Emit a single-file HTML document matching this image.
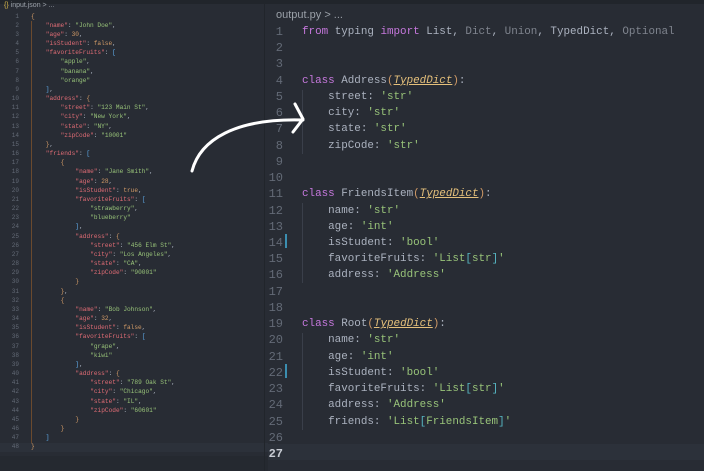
<!DOCTYPE html>
<html><head><style>
html,body{margin:0;padding:0;width:704px;height:471px;overflow:hidden;background:#282c34;}
.l{position:absolute;white-space:pre;font-family:"Liberation Mono",monospace;}
.L{font-size:6.15px;line-height:9.17px;color:#abb2bf;}
.R{font-size:10.9px;line-height:16.23px;color:#abb2bf;}
.n{position:absolute;font-family:"Liberation Mono",monospace;color:#636a76;text-align:right;white-space:nowrap;}
.k{color:#e06c75}.s{color:#98c379}.o{color:#d19a66}.b{color:#61afef}.y{color:#d19a66}
.p{color:#c678dd}.g{color:#7f848e}.t{color:#e5c07b;font-style:italic;text-decoration:underline;text-decoration-color:#e5c07b}.c{color:#56b6c2}
</style></head><body>
<div style="position:absolute;left:0;top:0;width:704px;height:4px;background:#21252b"></div>
<div style="position:absolute;left:0;top:443px;width:268px;height:9px;background:#2c313a"></div>
<div style="position:absolute;left:268px;top:444px;width:436px;height:16px;background:#2c313a"></div>
<div style="position:absolute;left:0;top:456px;width:268px;height:15px;background:#252930"></div>
<div style="position:absolute;left:264px;top:4px;width:1px;height:467px;background:#21252b"></div>
<div style="position:absolute;left:31px;top:21px;width:1px;height:422px;background:#6b4a2e"></div>
<div style="position:absolute;left:4px;top:2px;font:7px 'Liberation Sans',sans-serif;color:#9aa0a8"><span style="color:#d7b64a">{}</span> input.json &gt; ...</div>
<div style="position:absolute;left:276px;top:9px;font:11px 'Liberation Sans',sans-serif;color:#9aa0a8">output.py &gt; ...</div>
<div id="left"></div>
<div id="right"></div>
<div style="position:absolute;left:285px;top:234px;width:2px;height:14px;background:#3b8eb0"></div>
<div style="position:absolute;left:285px;top:364px;width:2px;height:14px;background:#3b8eb0"></div>
<div style="position:absolute;left:302px;top:90px;width:1px;height:64px;background:#3a3f4a"></div>
<div style="position:absolute;left:302px;top:203px;width:1px;height:80px;background:#3a3f4a"></div>
<div style="position:absolute;left:302px;top:333px;width:1px;height:97px;background:#3a3f4a"></div>
<svg style="position:absolute;left:0;top:0" width="704" height="471"><path d="M192,171 C200,140 235,118 303,120" fill="none" stroke="#fff" stroke-width="3" stroke-linecap="round"/><path d="M295,104 L303,119 L293,132" fill="none" stroke="#fff" stroke-width="3" stroke-linecap="round" stroke-linejoin="round"/></svg>
<script>
var L=[
[0,'<span class="o">{</span>'],
[1,'<span class="k">"name"</span>: <span class="s">"John Doe"</span>,'],
[1,'<span class="k">"age"</span>: <span class="o">30</span>,'],
[1,'<span class="k">"isStudent"</span>: <span class="o">false</span>,'],
[1,'<span class="k">"favoriteFruits"</span>: <span class="b">[</span>'],
[2,'<span class="s">"apple"</span>,'],
[2,'<span class="s">"banana"</span>,'],
[2,'<span class="s">"orange"</span>'],
[1,'<span class="b">]</span>,'],
[1,'<span class="k">"address"</span>: <span class="o">{</span>'],
[2,'<span class="k">"street"</span>: <span class="s">"123 Main St"</span>,'],
[2,'<span class="k">"city"</span>: <span class="s">"New York"</span>,'],
[2,'<span class="k">"state"</span>: <span class="s">"NY"</span>,'],
[2,'<span class="k">"zipCode"</span>: <span class="s">"10001"</span>'],
[1,'<span class="o">}</span>,'],
[1,'<span class="k">"friends"</span>: <span class="b">[</span>'],
[2,'<span class="o">{</span>'],
[3,'<span class="k">"name"</span>: <span class="s">"Jane Smith"</span>,'],
[3,'<span class="k">"age"</span>: <span class="o">28</span>,'],
[3,'<span class="k">"isStudent"</span>: <span class="o">true</span>,'],
[3,'<span class="k">"favoriteFruits"</span>: <span class="b">[</span>'],
[4,'<span class="s">"strawberry"</span>,'],
[4,'<span class="s">"blueberry"</span>'],
[3,'<span class="b">]</span>,'],
[3,'<span class="k">"address"</span>: <span class="o">{</span>'],
[4,'<span class="k">"street"</span>: <span class="s">"456 Elm St"</span>,'],
[4,'<span class="k">"city"</span>: <span class="s">"Los Angeles"</span>,'],
[4,'<span class="k">"state"</span>: <span class="s">"CA"</span>,'],
[4,'<span class="k">"zipCode"</span>: <span class="s">"90001"</span>'],
[3,'<span class="o">}</span>'],
[2,'<span class="o">}</span>,'],
[2,'<span class="o">{</span>'],
[3,'<span class="k">"name"</span>: <span class="s">"Bob Johnson"</span>,'],
[3,'<span class="k">"age"</span>: <span class="o">32</span>,'],
[3,'<span class="k">"isStudent"</span>: <span class="o">false</span>,'],
[3,'<span class="k">"favoriteFruits"</span>: <span class="b">[</span>'],
[4,'<span class="s">"grape"</span>,'],
[4,'<span class="s">"kiwi"</span>'],
[3,'<span class="b">]</span>,'],
[3,'<span class="k">"address"</span>: <span class="o">{</span>'],
[4,'<span class="k">"street"</span>: <span class="s">"789 Oak St"</span>,'],
[4,'<span class="k">"city"</span>: <span class="s">"Chicago"</span>,'],
[4,'<span class="k">"state"</span>: <span class="s">"IL"</span>,'],
[4,'<span class="k">"zipCode"</span>: <span class="s">"60601"</span>'],
[3,'<span class="o">}</span>'],
[2,'<span class="o">}</span>'],
[1,'<span class="b">]</span>'],
[0,'<span class="o">}</span>']];
var h='';
L.forEach(function(e,i){var y=11.5+i*9.17;
h+='<div class="n L" style="left:0;width:19px;top:'+y+'px;font-size:6px">'+(i+1)+'</div>';
h+='<div class="l L" style="left:'+(31+e[0]*14.8)+'px;top:'+y+'px">'+e[1]+'</div>';});
document.getElementById('left').innerHTML=h;
var R=[
'<span class="p">from</span> typing <span class="p">import</span> List, <span class="g">Dict</span>, <span class="g">Union</span>, TypedDict, <span class="g">Optional</span>',
'','',
'<span class="p">class</span> Address<span class="y">(</span><span class="t">TypedDict</span><span class="y">)</span>:',
'    street: <span class="s">\'str\'</span>',
'    city: <span class="s">\'str\'</span>',
'    state: <span class="s">\'str\'</span>',
'    zipCode: <span class="s">\'str\'</span>',
'','',
'<span class="p">class</span> FriendsItem<span class="y">(</span><span class="t">TypedDict</span><span class="y">)</span>:',
'    name: <span class="s">\'str\'</span>',
'    age: <span class="s">\'int\'</span>',
'    isStudent: <span class="s">\'bool\'</span>',
'    favoriteFruits: <span class="s">\'List<span class="c">[</span>str<span class="c">]</span>\'</span>',
'    address: <span class="s">\'Address\'</span>',
'','',
'<span class="p">class</span> Root<span class="y">(</span><span class="t">TypedDict</span><span class="y">)</span>:',
'    name: <span class="s">\'str\'</span>',
'    age: <span class="s">\'int\'</span>',
'    isStudent: <span class="s">\'bool\'</span>',
'    favoriteFruits: <span class="s">\'List<span class="c">[</span>str<span class="c">]</span>\'</span>',
'    address: <span class="s">\'Address\'</span>',
'    friends: <span class="s">\'List<span class="c">[</span>FriendsItem<span class="c">]</span>\'</span>',
'',''];
h='';
R.forEach(function(t,i){var y=24+i*16.23;
h+='<div class="n R" style="left:250px;width:33px;font-size:12px;top:'+y+'px;'+(i==26?'color:#c8ccd4;font-weight:bold':'')+'">'+(i+1)+'</div>';
h+='<div class="l R" style="left:302px;top:'+y+'px">'+t+'</div>';});
document.getElementById('right').innerHTML=h;
</script>
</body></html>
